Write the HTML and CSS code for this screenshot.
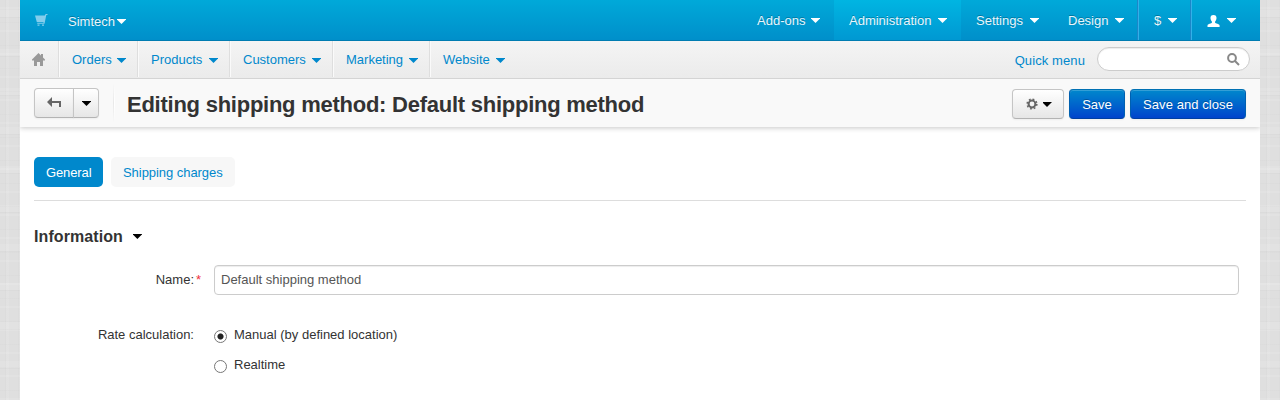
FILE: index.html
```html
<!DOCTYPE html>
<html lang="en">
<head>
<meta charset="utf-8">
<title>Editing shipping method</title>
<link rel="stylesheet" href="styles.css">
</head>
<body>
<div class="page">
  <header class="topbar">
    <svg class="cart" width="14" height="13" viewBox="0 0 14 13"><path d="M0 1.500h9.800l.8-1.500H12.500v1h-1.200L9.500 9.700H2.200V8.700H8.400L8.600 8H1.800z"/><path d="M2.500 10.500h2v1.300h-2zM7 10.500h2v1.300H7z"/></svg>
    <a class="brand">Simtech<i class="caret"></i></a>
    <nav class="topmenu">
      <a class="top-item addons"><span>Add-ons</span><i class="caret"></i></a>
      <a class="top-item admin active"><span>Administration</span><i class="caret"></i></a>
      <a class="top-item settings"><span>Settings</span><i class="caret"></i></a>
      <a class="top-item design"><span>Design</span><i class="caret"></i></a>
      <a class="top-item currency divided"><span>$</span><i class="caret"></i></a>
      <a class="top-item user divided"><svg width="13" height="12" viewBox="0 0 13 12"><path d="M6.500 0C8.600 0 9.700 1.200 9.500 3.300 9.400 4.900 8.700 5.900 8.100 6.500v1.300c.3.800 4.200 1.200 4.500 2.600V12H.5v-1.600C.8 9 4.600 8.600 4.900 7.800V6.500C4.300 5.900 3.600 4.900 3.500 3.300 3.300 1.200 4.400 0 6.500 0z"/></svg><i class="caret"></i></a>
    </nav>
  </header>
  <div class="navbar">
    <a class="home"><svg width="14" height="13" viewBox="0 0 14 13"><path d="M6.500 0L9 2.500V1h2v3.500L13 6.600V7.500H11V13H8V9H5v4H2V7.500H0V6.600z"/></svg></a>
    <nav class="mainmenu">
      <a class="nav-item orders">Orders<i class="caret"></i></a>
      <a class="nav-item products">Products<i class="caret"></i></a>
      <a class="nav-item customers">Customers<i class="caret"></i></a>
      <a class="nav-item marketing">Marketing<i class="caret"></i></a>
      <a class="nav-item website">Website<i class="caret"></i></a>
    </nav>
    <a class="quick">Quick menu</a>
    <div class="search"><svg width="13" height="13" viewBox="0 0 13 13"><circle cx="5" cy="5" r="3.900"/><path d="M8 8l4 4"/></svg></div>
  </div>
  <div class="titlebar">
    <div class="btn-group">
      <a class="btn back"><svg width="15" height="11" viewBox="0 0 15 11"><path d="M0 5l5-5v4h9v6h-2V6H5v4z"/></svg></a>
      <a class="btn drop"><i class="caret"></i></a>
    </div>
    <div class="sep"></div>
    <h1>Editing shipping method: Default shipping method</h1>
    <div class="actions">
      <a class="btn gear"><svg width="12" height="12" viewBox="0 0 12 12"><circle class="ring" cx="6" cy="6" r="3.400"/><circle class="teeth" cx="6" cy="6" r="4.800"/></svg><i class="caret"></i></a>
      <a class="btn primary save">Save</a>
      <a class="btn primary save-close">Save and close</a>
    </div>
  </div>
  <main class="content">
    <div class="tabs"><a class="tab current">General</a><a class="tab charges">Shipping charges</a></div>
    <h2>Information<i class="caret"></i></h2>
    <div class="row name-row">
      <label class="label" for="name">Name:<span class="required">*</span></label>
      <input class="field" id="name" type="text" value="Default shipping method">
    </div>
    <div class="row">
      <div class="label">Rate calculation:</div>
      <div class="options">
        <label class="option"><span class="radio checked"></span>Manual (by defined location)</label>
        <label class="option"><span class="radio"></span>Realtime</label>
      </div>
    </div>
  </main>
</div>
</body>
</html>
```
FILE: styles.css
```css
* { box-sizing: border-box; }

html { height: 100%; }

body {
  margin: 0;
  height: 100%;
  overflow: hidden;
  font: 13px/20px "Liberation Sans", Arial, sans-serif;
  color: #333;
  background-color: #dfdfdf;
  background-image:
    repeating-linear-gradient(0deg, rgba(255,255,255,.1) 0 2px, transparent 2px 9px, rgba(0,0,0,.012) 9px 10px, transparent 10px 23px),
    repeating-linear-gradient(0deg, transparent 0 31px, rgba(0,0,0,.02) 31px 32px, rgba(255,255,255,.1) 32px 39px),
    repeating-linear-gradient(90deg, transparent 0 5px, rgba(0,0,0,.015) 5px 6px, rgba(255,255,255,.08) 6px 9px, transparent 9px 13px);
}

.page { width: 1240px; height: 400px; margin: 0 auto; background: #fff; }

.caret {
  flex: none;
  width: 9px;
  height: 5px;
  margin-right: -1px;
  background: currentColor;
  clip-path: polygon(0 0, 100% 0, 100% .5px, 4.500px 100%, 0 .5px);
}

.topbar {
  display: flex;
  align-items: flex-start;
  height: 41px;
  padding: 0 10px 0 15px;
  color: #fff;
  background: linear-gradient(#00a9d9, #008fca);
  border-bottom: 1px solid #007cb1;
  text-shadow: 0 -1px 0 rgba(0,0,0,.25);
}
.cart { margin-top: 14px; fill: #84cdec; }
.brand { display: flex; align-items: center; height: 40px; margin-left: 19px; padding-top: 3px; color: #e8f6fc; }
.brand .caret { color: #fff; margin-left: 2px; }
.topmenu { display: flex; margin-left: auto; }
.top-item {
  display: flex;
  align-items: center;
  justify-content: space-between;
  height: 40px;
  padding: 1px 15px 0;
  color: #e8f6fc;
}
.top-item .caret { color: #fff; }
.addons, .settings { width: 92px; }
.admin { width: 127px; }
.design { width: 85px; }
.user svg { fill: #fff; }
.active { background: linear-gradient(#00b5e2, #0098d2); }
.divided { margin-left: -1px; padding-left: 16px; border-left: 1px solid #1d86c8; box-shadow: inset 1px 0 0 #34b0e8; }
.currency { width: 54px; }
.user { width: 60px; }

.navbar {
  display: flex;
  height: 38px;
  padding-right: 10px;
  background: linear-gradient(#f4f4f4, #ebebeb);
  border-bottom: 1px solid #d4d4d4;
  color: #0088cc;
}
.home { width: 38px; padding: 12px 0 0 12px; line-height: 0; }
.home svg { fill: #999; }
.mainmenu { display: flex; height: 36px; }
.nav-item {
  display: flex;
  align-items: center;
  justify-content: space-between;
  padding: 2px 12px 0 13px;
  border-left: 1px solid #dedede;
  box-shadow: inset 1px 0 0 #fafafa;
}
.nav-item .caret { margin-top: 1px; }
.orders { width: 79px; }
.products { width: 92px; }
.customers { width: 103px; }
.marketing { width: 97px; }
.website { width: 87px; }
.quick { margin: 10px 12px 0 auto; letter-spacing: .1px; }
.search {
  display: flex;
  align-items: center;
  justify-content: flex-end;
  width: 153px;
  height: 24px;
  margin-top: 6px;
  padding-right: 9px;
  border: 1px solid #ccc;
  border-radius: 12px;
  background: #fff;
  box-shadow: inset 0 1px 1px rgba(0,0,0,.075);
}
.search svg { fill: none; stroke: #888; stroke-width: 2; }

.titlebar {
  display: flex;
  height: 48px;
  padding: 9px 14px 0;
  background: #f9f9f9;
  box-shadow: 0 1px 5px rgba(0,0,0,.22);
  clip-path: inset(0 0 -8px 0);
}
.btn-group { display: flex; }
.btn {
  display: flex;
  align-items: center;
  justify-content: center;
  height: 30px;
  border: 1px solid #c5c5c5;
  border-bottom-color: #b3b3b3;
  border-radius: 4px;
  background: linear-gradient(#fff, #e6e6e6);
  box-shadow: inset 0 1px 0 rgba(255,255,255,.2), 0 1px 2px rgba(0,0,0,.05);
}
.btn .caret, h2 .caret { color: #000; }
.btn .caret { margin-top: 1px; }
.back { width: 40px; border-radius: 4px 0 0 4px; }
.back svg { margin-bottom: 1px; fill: #666; }
.drop { width: 26px; margin-left: -1px; border-radius: 0 4px 4px 0; }
.sep {
  width: 2px;
  height: 38px;
  margin: -4px 0 0 14px;
  background: linear-gradient(90deg, #e8e8e8 50%, #fff 50%);
  mask-image: linear-gradient(transparent, #000 50%, transparent);
}
h1 { margin: 2px 0 0 12px; font-size: 22px; line-height: 30px; letter-spacing: -.25px; white-space: nowrap; }
.actions { display: flex; gap: 5px; margin: 1px 0 0 auto; }
.gear { width: 52px; gap: 5px; }
.gear svg { fill: none; stroke: #666; }
.ring { stroke-width: 2; }
.teeth { stroke-width: 1.600; stroke-dasharray: 1.800 1.970; }
.primary {
  padding-top: 2px;
  color: #fff;
  border-color: #0071b4 #0060b0 #003fa2;
  background: linear-gradient(#0088cc, #0044cc);
  text-shadow: 0 -1px 0 rgba(0,0,0,.25);
}
.save { width: 56px; }
.save-close { width: 116px; letter-spacing: .07px; }

.content { padding: 30px 14px 0; }
.tabs { display: flex; gap: 8px; height: 44px; border-bottom: 1px solid #ddd; }
.tab { height: 30px; padding: 6px 0 4px 12px; border-radius: 5px; background: #f7f7f7; color: #0088cc; letter-spacing: -.05px; white-space: nowrap; }
.current { width: 69px; background: #0088cc; color: #fff; letter-spacing: -.12px; }
.charges { width: 124px; }
h2 { display: flex; align-items: center; gap: 10px; margin: 26px 0 18px; font-size: 16px; line-height: 20px; letter-spacing: .08px; }
h2 .caret { margin-bottom: 1px; }
.row { display: flex; gap: 20px; }
.label { position: relative; width: 160px; padding-top: 5px; text-align: right; }
.required { position: absolute; left: 162px; color: #f03040; }
.name-row { margin-bottom: 25px; }
.field {
  width: 1025px;
  height: 30px;
  padding: 3px 6px 4px;
  border: 1px solid #ccc;
  border-radius: 4px;
  box-shadow: inset 0 1px 1px rgba(0,0,0,.075);
  background: #fff;
  color: #555;
  font: inherit;
}
.options { display: grid; gap: 10px; padding-top: 5px; }
.option { display: flex; height: 20px; gap: 7px; }
.radio {
  width: 13px;
  height: 13px;
  margin-top: 5px;
  border: 1px solid #777;
  border-radius: 50%;
}
.checked { background: radial-gradient(circle, #222 0 2.600px, #fff 3.500px); }
```
